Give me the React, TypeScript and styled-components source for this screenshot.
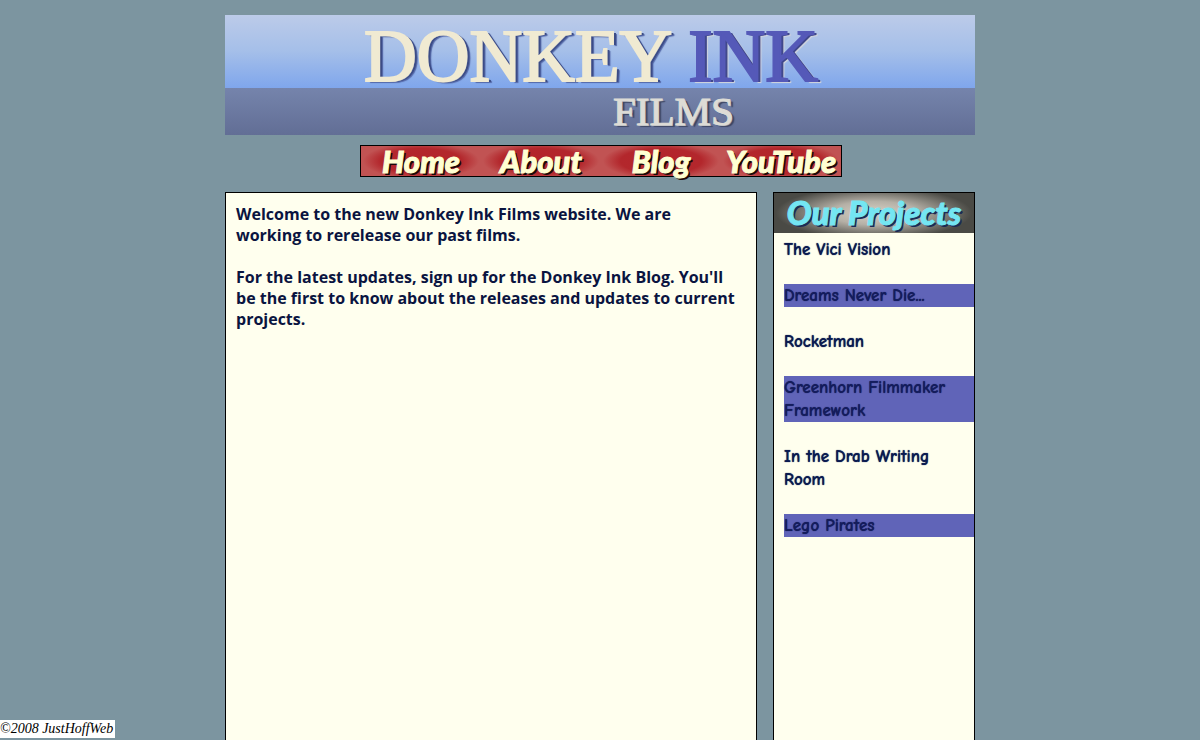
import React from "react";
import styled, { createGlobalStyle } from "styled-components";

const GlobalStyle = createGlobalStyle`
  * { box-sizing: border-box; }
  body {
    margin: 0;
    background: #7c95a0;
    color: #0a1440;
    font-family: "Segoe UI", "Open Sans", sans-serif;
  }
`;

const Page = styled.div`
  display: flex;
  flex-direction: column;
  max-width: 750px;
  min-height: 100vh;
  margin: 0 auto;
  padding-top: 15px;
`;

const Banner = styled.header`
  height: 120px;
  background: linear-gradient(#bccbe9 0, #a5bfe9 36px, #7fa6ec 73px, #7584ac 73px, #626e95 120px);
  font-family: "Liberation Serif", serif;
`;

const Title = styled.h1`
  display: flex;
  justify-content: center;
  gap: 16px;
  height: 73px;
  margin: 0;
  padding-right: 18px;
  font-size: 73px;
  line-height: 84px;
  font-weight: 400;
`;

const TitleWord = styled.span<{ $tone: "cream" | "violet" }>`
  color: ${(p) => (p.$tone === "cream" ? "#f0ead2" : "#5559b8")};
  -webkit-text-stroke: 2px ${(p) => (p.$tone === "cream" ? "#f0ead2" : "#5559b8")};
  text-shadow: ${(p) =>
    p.$tone === "cream"
      ? "1px 1px 0 #8a96b4, 3px 1px 0 #3c4c86, 4px 2px 1px #5468a8"
      : "1px 1px 0 #40488c, 3px 1px 0 #40488c, 4px 2px 1px #d4d6dc"};
`;

const Subtitle = styled.p`
  margin: 0;
  padding-left: 388px;
  font-size: 41px;
  line-height: 47px;
  color: #dddcd6;
  -webkit-text-stroke: 1px #dddcd6;
  text-shadow: 1px 1px 0 #a5a8b2, 3px 2px 1px #3d4663;
`;

const Nav = styled.nav`
  display: flex;
  align-self: center;
  margin: 10px 0 15px 2px;
  border: 1px solid #000;
`;

const NavLink = styled.a`
  width: 120px;
  height: 30px;
  background: radial-gradient(ellipse 58px 18px at center, #b3232a 0, #b3272c 70%, #c15353 100%);
  color: #ffffd2;
  font: italic 900 31px/30px Lato, sans-serif;
  text-align: center;
  text-decoration: none;
  white-space: nowrap;
  -webkit-text-stroke: 1px #ffffd2;
  text-shadow: 2px 2px 0 #1c0808;
`;

const Columns = styled.div`
  display: flex;
  flex: 1;
  gap: 16px;
`;

const Main = styled.main`
  flex: 1;
  padding: 11px 18px 10px 10px;
  border: 1px solid #000;
  border-bottom: 0;
  background: #ffffee;
  font-size: 16px;
  line-height: 21px;
  font-weight: 700;
`;

const Paragraph = styled.p`
  margin: 0 0 21px;
`;

const Sidebar = styled.aside`
  flex: 0 0 202px;
  border: 1px solid #000;
  border-bottom: 0;
  background: #ffffee;
`;

const SidebarTitle = styled.h2`
  height: 40px;
  margin: 0;
  background: radial-gradient(ellipse 98px 26px at center, #d8d2c6 0, #b5b0a6 45%, #4a4a45 100%);
  color: #74e6f2;
  font: italic 900 33px/38px Lato, sans-serif;
  text-align: center;
  -webkit-text-stroke: 1px #74e6f2;
  text-shadow: 2px 2px 0 #1c2a55;
`;

const ProjectList = styled.ul`
  display: flex;
  flex-direction: column;
  gap: 23px;
  margin: 0;
  padding: 5px 0 0 10px;
  list-style: none;
  font: 700 17px/23px "Comic Sans MS", "Comic Neue", Lato, sans-serif;
`;

const Project = styled.li<{ $marked: boolean }>`
  background: ${(p) => (p.$marked ? "#6064b8" : "transparent")};
  color: ${(p) => (p.$marked ? "#141c5c" : "#0a1a50")};
  text-shadow: 0 0 1px currentColor;
`;

const Credit = styled.footer`
  position: fixed;
  left: 0;
  bottom: 2px;
  padding-right: 2px;
  background: #fff;
  color: #000;
  font: italic 400 14px/18px "Liberation Serif", serif;
`;

const links = ["Home", "About", "Blog", "YouTube"];

const projects = [
  "The Vici Vision",
  "Dreams Never Die...",
  "Rocketman",
  "Greenhorn Filmmaker Framework",
  "In the Drab Writing Room",
  "Lego Pirates",
];

export default function App() {
  return (
    <>
      <GlobalStyle />
      <Page>
        <Banner>
          <Title>
            <TitleWord $tone="cream">DONKEY</TitleWord>
            <TitleWord $tone="violet">INK</TitleWord>
          </Title>
          <Subtitle>FILMS</Subtitle>
        </Banner>
        <Nav>
          {links.map((name) => (
            <NavLink key={name} href={`#${name.toLowerCase()}`}>
              {name}
            </NavLink>
          ))}
        </Nav>
        <Columns>
          <Main>
            <Paragraph>
              Welcome to the new Donkey Ink Films website. We are working to rerelease our past films.
            </Paragraph>
            <Paragraph>
              For the latest updates, sign up for the Donkey Ink Blog. You'll be the first to know about
              the releases and updates to current projects.
            </Paragraph>
          </Main>
          <Sidebar>
            <SidebarTitle>Our Projects</SidebarTitle>
            <ProjectList>
              {projects.map((name, index) => (
                <Project key={name} $marked={index % 2 === 1}>
                  {name}
                </Project>
              ))}
            </ProjectList>
          </Sidebar>
        </Columns>
      </Page>
      <Credit>©2008 JustHoffWeb</Credit>
    </>
  );
}
